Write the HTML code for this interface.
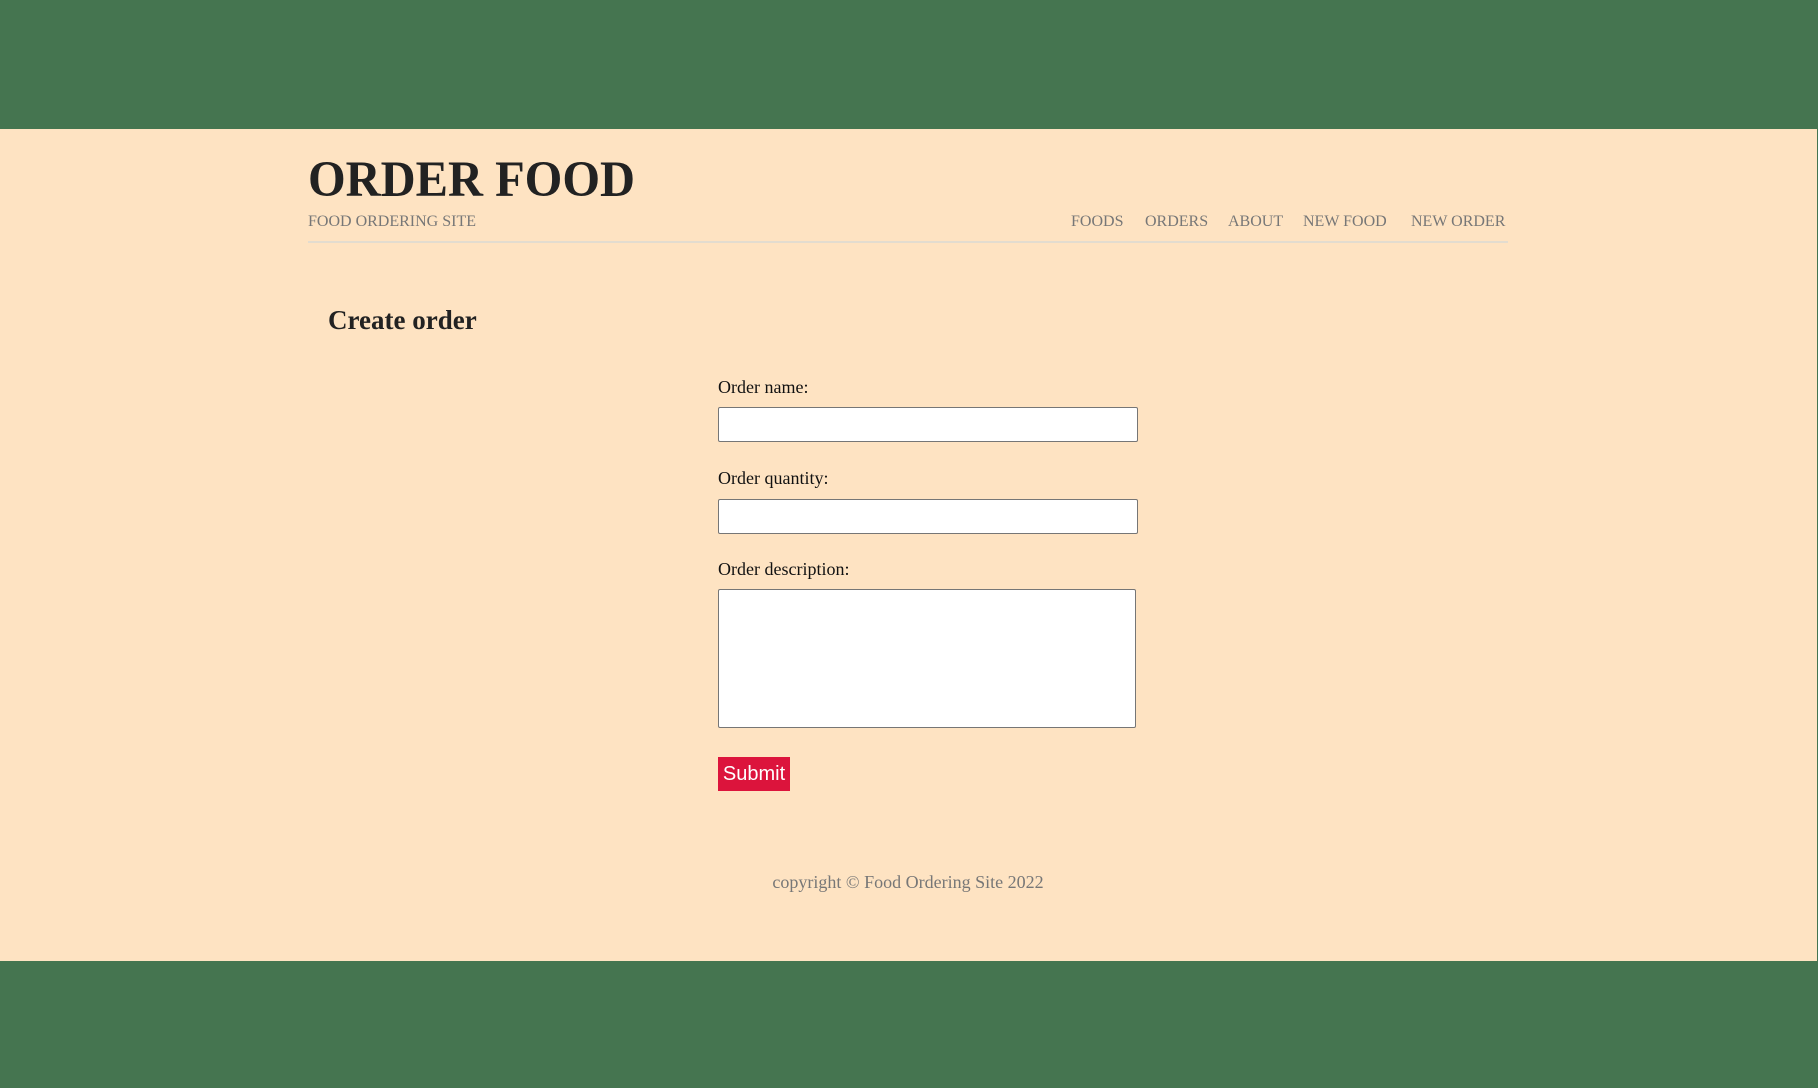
<!DOCTYPE html>
<html><head><meta charset="utf-8"><style>
html,body{margin:0;padding:0}
body{width:1818px;height:1088px;background:#457550;position:relative;overflow:hidden;font-family:"Liberation Serif",serif}
.main{position:absolute;left:0;top:129px;width:1817px;height:832px;background:#fee3c2}
.a{position:absolute;white-space:nowrap}
h1{position:absolute;margin:0;left:308px;top:155px;font:bold 51px/1 "Liberation Serif",serif;color:#222;transform:scaleX(0.95);transform-origin:left}
.sub{left:308px;top:213px;font-size:16px;color:#777}
.nav{top:213px;font-size:16px;color:#777}
.line{position:absolute;left:308px;top:241px;width:1200px;height:2px;background:#e3dccf}
.h2{left:328px;top:305px;font-weight:bold;font-size:27px;color:#222}
.lbl{left:718px;font-size:18px;color:#111}
.inp{position:absolute;left:718px;background:#fff;border:1px solid #767676;border-radius:2px;box-sizing:border-box}
.btn{position:absolute;left:718px;top:757px;width:72px;height:34px;background:#dc143c;color:#fff;font:20px/34px "Liberation Sans",sans-serif;text-align:center}
.foot{left:0;width:1816px;text-align:center;top:872px;font-size:18px;color:#777}
</style></head><body>
<div class="main"></div>
<h1>ORDER FOOD</h1>
<div class="a sub">FOOD ORDERING SITE</div>
<div class="a nav" style="left:1071px">FOODS</div>
<div class="a nav" style="left:1145px">ORDERS</div>
<div class="a nav" style="left:1228px">ABOUT</div>
<div class="a nav" style="left:1303px">NEW FOOD</div>
<div class="a nav" style="left:1411px">NEW ORDER</div>
<div class="line"></div>
<div class="a h2">Create order</div>
<div class="a lbl" style="top:377px">Order name:</div>
<div class="inp" style="top:407px;width:420px;height:35px"></div>
<div class="a lbl" style="top:468px">Order quantity:</div>
<div class="inp" style="top:499px;width:420px;height:35px"></div>
<div class="a lbl" style="top:559px">Order description:</div>
<div class="inp" style="top:589px;width:418px;height:139px"></div>
<div class="btn">Submit</div>
<div class="a foot">copyright © Food Ordering Site 2022</div>
</body></html>
